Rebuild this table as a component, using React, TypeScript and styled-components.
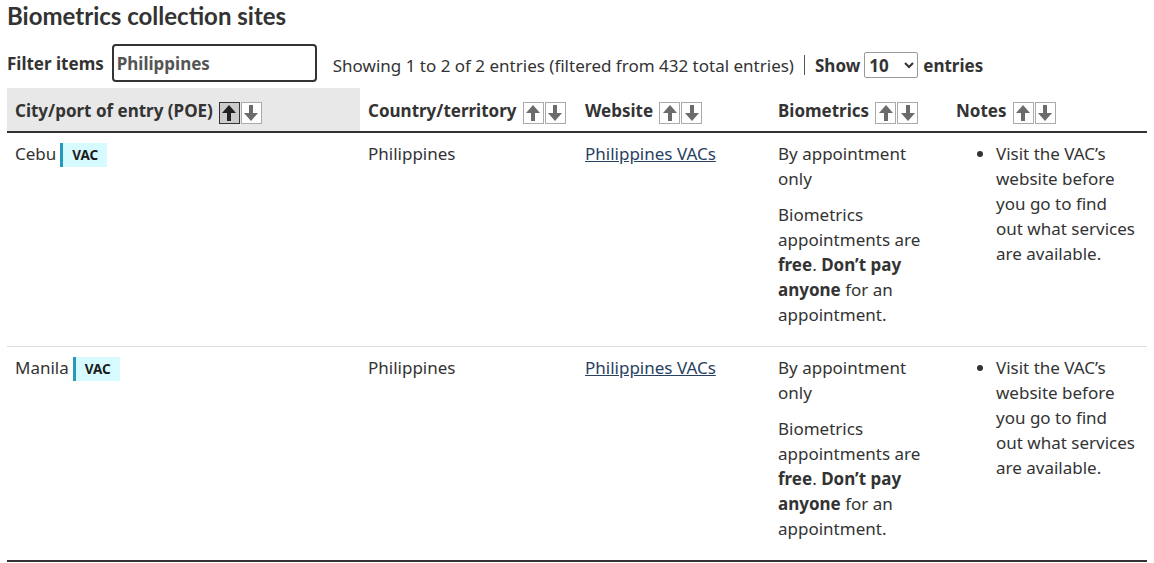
import styled, {createGlobalStyle} from "styled-components";

type Site = {
    city: string,
    country: string,
    website: string,
}

const sites: Site[] = [
    {city: "Cebu", country: "Philippines", website: "Philippines VACs"},
    {city: "Manila", country: "Philippines", website: "Philippines VACs"},
];

const columns = [
    {label: "City/port of entry (POE)", width: 353, sorted: true},
    {label: "Country/territory", width: 217, sorted: false},
    {label: "Website", width: 193, sorted: false},
    {label: "Biometrics", width: 178, sorted: false},
    {label: "Notes", width: 199, sorted: false},
];

function Arrow({down}: { down?: boolean }) {
    return (
        <svg width="16" height="18" viewBox="0 0 16 18">
            <g transform={down ? "rotate(180 8 9)" : undefined}>
                <polygon points="8,1 15,9 10,9 10,17 6,17 6,9 1,9" fill="currentColor"/>
            </g>
        </svg>
    );
}

function SortButtons({active}: { active: boolean }) {
    return (
        <SortGroup>
            <SortButton type="button" $active={active} aria-label="Sort ascending"><Arrow/></SortButton>
            <SortButton type="button" $active={false} aria-label="Sort descending"><Arrow down/></SortButton>
        </SortGroup>
    );
}

function App() {
    return (
        <Page>
            <GlobalStyle/>
            <Heading>Biometrics collection sites</Heading>
            <FilterRow>
                <FilterLabel htmlFor="filter">Filter items</FilterLabel>
                <FilterInput id="filter" defaultValue="Philippines"/>
                <Info>Showing 1 to 2 of 2 entries (filtered from 432 total entries)</Info>
                <Divider/>
                <ShowLabel>Show</ShowLabel>
                <Select defaultValue="10">
                    <option value="10">10</option>
                    <option value="25">25</option>
                    <option value="50">50</option>
                </Select>
                <ShowLabel>entries</ShowLabel>
            </FilterRow>
            <Table>
                <colgroup>
                    {columns.map(c => <col key={c.label} style={{width: c.width}}/>)}
                </colgroup>
                <thead>
                <tr>
                    {columns.map(c =>
                        <Th key={c.label} $sorted={c.sorted}>
                            {c.label}<SortButtons active={c.sorted}/>
                        </Th>,
                    )}
                </tr>
                </thead>
                <tbody>
                {sites.map(site =>
                    <Tr key={site.city}>
                        <Td>
                            {site.city}<Badge>VAC</Badge>
                        </Td>
                        <Td>{site.country}</Td>
                        <Td><Link href="#">{site.website}</Link></Td>
                        <Td>
                            <P>By appointment only</P>
                            <P>
                                Biometrics appointments are <b>free</b>. <b>Don’t pay anyone</b> for an
                                appointment.
                            </P>
                        </Td>
                        <Td>
                            <Ul>
                                <li>Visit the VAC’s website before you go to find out what services are available.</li>
                            </Ul>
                        </Td>
                    </Tr>,
                )}
                </tbody>
            </Table>
        </Page>
    );
}

/* CSS */

const GlobalStyle = createGlobalStyle`
  body {
    margin: 0;
    background: #fff;
    color: #333;
    font-family: "Noto Sans", "DejaVu Sans", sans-serif;
    font-size: 17px;
    line-height: 25px;
  }
`;

const Page = styled.div`
  padding: 0 7px;
`;

const Heading = styled.h2`
  margin: 0;
  padding-top: 1px;
  font-family: Lato, "Noto Sans", sans-serif;
  font-weight: 700;
  font-size: 24px;
  line-height: 30px;
  color: #333;
`;

const FilterRow = styled.div`
  display: flex;
  align-items: center;
  margin-top: 13px;
  height: 38px;
`;

const FilterLabel = styled.label`
  font-weight: 700;
  margin-right: 8px;
`;

const FilterInput = styled.input`
  box-sizing: border-box;
  width: 205px;
  height: 38px;
  border: 2px solid #333;
  border-radius: 4px;
  padding: 0 3px;
  font-family: inherit;
  font-size: 17px;
  font-weight: 700;
  color: #555;
  outline: none;
`;

const Info = styled.span`
  margin-left: 16px;
  margin-top: 4px;
`;

const Divider = styled.span`
  width: 1px;
  height: 20px;
  background: #555;
  margin: 4px 10px 0;
`;

const ShowLabel = styled.span`
  font-weight: 700;
  margin-top: 4px;
`;

const Select = styled.select`
  box-sizing: border-box;
  width: 54px;
  height: 26px;
  margin: 4px 5px 0 4px;
  border: 1px solid #999;
  border-radius: 2px;
  background: #fff;
  font-family: inherit;
  font-size: 17px;
  font-weight: 700;
  color: #333;
`;

const Table = styled.table`
  width: 1140px;
  margin-top: 6px;
  border-collapse: collapse;
  table-layout: fixed;
  border-bottom: 2px solid #333;
`;

const Th = styled.th<{ $sorted: boolean }>`
  text-align: left;
  font-weight: 700;
  padding: 10px 8px 7px;
  white-space: nowrap;
  background: ${p => p.$sorted ? "#e8e8e8" : "transparent"};
  border-bottom: 2px solid #333;
`;

const SortGroup = styled.span`
  display: inline-flex;
  gap: 1px;
  margin-left: 6px;
  vertical-align: -5px;
`;

const SortButton = styled.button<{ $active: boolean }>`
  box-sizing: border-box;
  width: 21px;
  height: 22px;
  padding: 0;
  display: flex;
  align-items: center;
  justify-content: center;
  border: 1px solid ${p => p.$active ? "#333" : "#aaa"};
  background: ${p => p.$active ? "#ccc" : "#fff"};
  color: ${p => p.$active ? "#222" : "#6b6b6b"};
`;

const Tr = styled.tr`
  & + & td {
    border-top: 1px solid #ddd;
  }
`;

const Td = styled.td`
  vertical-align: top;
  padding: 8px 8px;
`;

const Badge = styled.span`
  display: inline-block;
  margin-left: 4px;
  padding: 0 9px 0 9px;
  border-left: 3px solid #269abc;
  background: #d7faff;
  font-size: 13.5px;
  font-weight: 700;
  line-height: 24px;
  color: #1b1b1b;
  vertical-align: top;
  margin-top: 2px;
`;

const Link = styled.a`
  color: #284162;
  text-decoration: underline;
`;

const P = styled.p`
  margin: 0 0 11px;
`;

const Ul = styled.ul`
  margin: 0 0 11px;
  padding: 0 1px 0 40px;
`;

/* CSS */

export default App;
